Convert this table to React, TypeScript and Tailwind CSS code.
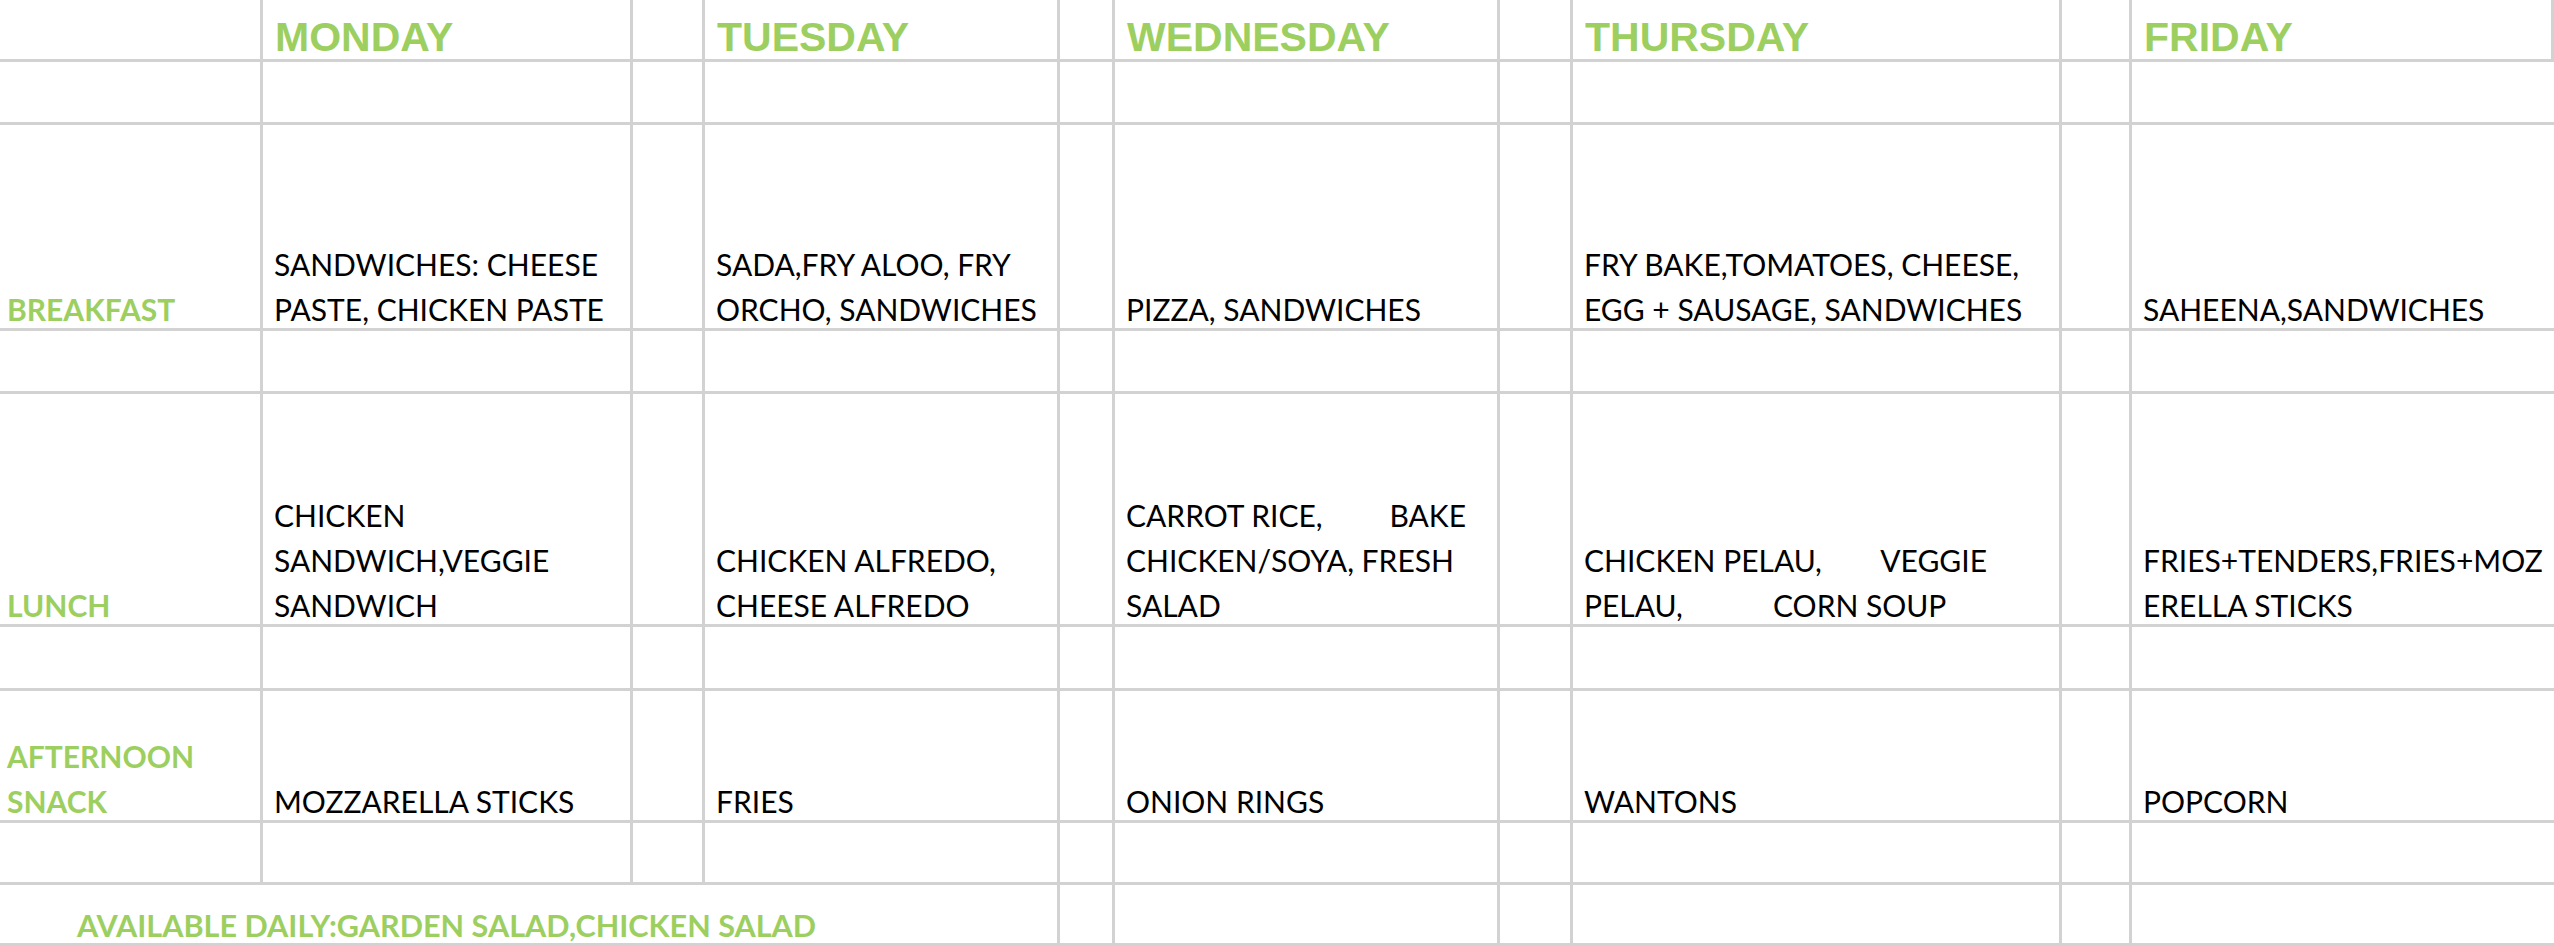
import React from "react";

type Line = string | { left: string; right: string; width: number } | { a: string; b: string; pad: number };

const cols = "grid-cols-[263px_370px_72px_355px_55px_385px_73px_489px_70px_422px]";
const rows = "grid-rows-[62px_63px_206px_63px_233px_64px_132px_62px_61px]";

const days = ["MONDAY", "TUESDAY", "WEDNESDAY", "THURSDAY", "FRIDAY"];

const meals: { label: string[]; items: Line[][] }[] = [
  {
    label: ["BREAKFAST"],
    items: [
      ["SANDWICHES: CHEESE", "PASTE, CHICKEN PASTE"],
      ["SADA,FRY ALOO, FRY", "ORCHO, SANDWICHES"],
      ["PIZZA, SANDWICHES"],
      ["FRY BAKE,TOMATOES, CHEESE,", "EGG + SAUSAGE, SANDWICHES"],
      ["SAHEENA,SANDWICHES"],
    ],
  },
  {
    label: ["LUNCH"],
    items: [
      ["CHICKEN", "SANDWICH,VEGGIE", "SANDWICH"],
      ["CHICKEN ALFREDO,", "CHEESE ALFREDO"],
      [{ left: "CARROT RICE,", right: "BAKE", width: 340 }, "CHICKEN/SOYA, FRESH", "SALAD"],
      [{ left: "CHICKEN PELAU,", right: "VEGGIE", width: 403 }, { a: "PELAU,", b: "CORN SOUP", pad: 189 }],
      ["FRIES+TENDERS,FRIES+MOZ", "ERELLA STICKS"],
    ],
  },
  {
    label: ["AFTERNOON", "SNACK"],
    items: [["MOZZARELLA STICKS"], ["FRIES"], ["ONION RINGS"], ["WANTONS"], ["POPCORN"]],
  },
];

// grid line colour
const border = "border-[#d2d2d2]";

function Cell({ last, children, className = "" }: { last?: boolean; children?: React.ReactNode; className?: string }) {
  return (
    <div className={`flex flex-col justify-end border-b-[3px] ${last ? "" : "border-r-[3px]"} ${border} overflow-hidden ${className}`}>
      {children}
    </div>
  );
}

function Text({ lines }: { lines: Line[] }) {
  return (
    <div className="-mb-[4px] whitespace-nowrap text-[30px] leading-[45px] text-black" style={{ fontFamily: "Lato, 'Open Sans', sans-serif" }}>
      {lines.map((l, i) => {
        if (typeof l === "string") return <div key={i}>{l}</div>;
        if ("left" in l)
          return (
            <div key={i} className="flex justify-between" style={{ width: l.width }}>
              <span>{l.left}</span>
              <span>{l.right}</span>
            </div>
          );
        return (
          <div key={i} className="flex">
            <span className="inline-block" style={{ width: l.pad }}>{l.a}</span>
            <span>{l.b}</span>
          </div>
        );
      })}
    </div>
  );
}

function EmptyRow() {
  return (
    <>
      {Array.from({ length: 10 }).map((_, i) => (
        <Cell key={i} last={i === 9} />
      ))}
    </>
  );
}

export default function App() {
  return (
    <div className={`grid ${cols} ${rows} w-[2554px] h-[946px] bg-white overflow-hidden`}>
      {/* header */}
      <Cell />
      {days.map((d, i) => (
        <React.Fragment key={d}>
          <Cell className="pl-3 pb-[1px]">
            <div className="text-[41px] leading-[41px] font-bold text-[#9ccf5f]" style={{ fontFamily: "'Liberation Sans', Arial, sans-serif" }}>
              {d}
            </div>
          </Cell>
          {i < 4 && <Cell />}
        </React.Fragment>
      ))}
      <EmptyRow />

      {meals.map((m, mi) => (
        <React.Fragment key={mi}>
          <Cell className="pl-[7px]">
            <div className="-mb-[4px] text-[30px] leading-[45px] font-bold text-[#9ccf5f]" style={{ fontFamily: "Lato, 'Open Sans', sans-serif" }}>
              {m.label.map((t) => (
                <div key={t}>{t}</div>
              ))}
            </div>
          </Cell>
          {m.items.map((it, i) => (
            <React.Fragment key={i}>
              <Cell className="pl-[11px]" last={i === 4}>
                <Text lines={it} />
              </Cell>
              {i < 4 && <Cell />}
            </React.Fragment>
          ))}
          <EmptyRow />
        </React.Fragment>
      ))}

      {/* footer, merged over the first four columns */}
      <div className={`col-span-4 flex items-end border-r-[3px] border-b-[3px] ${border} pl-[77px]`}>
        <div className="-mb-[5px] text-[30.6px] leading-[45px] font-bold text-[#9ccf5f] whitespace-nowrap" style={{ fontFamily: "Lato, 'Open Sans', sans-serif" }}>
          AVAILABLE DAILY:GARDEN SALAD,CHICKEN SALAD
        </div>
      </div>
      {Array.from({ length: 6 }).map((_, i) => (
        <Cell key={i} last={i === 5} />
      ))}
    </div>
  );
}
